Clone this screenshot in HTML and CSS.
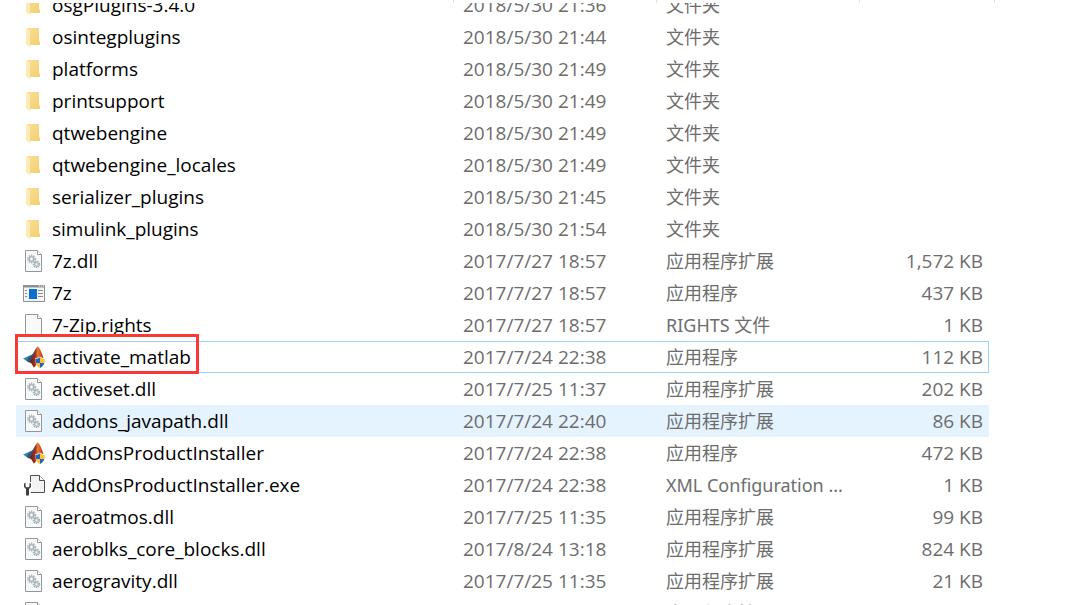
FILE: index.html
```html
<!DOCTYPE html>
<html lang="zh-CN">
  <head>
    <meta charset="utf-8">
    <title>bin</title>
    <link rel="stylesheet" href="styles.css">
  </head>
  <body>
    <!-- icon set -->
    <svg class="sprite" aria-hidden="true">
      <linearGradient id="fold" x1="0" y1="0" x2="1" y2="1">
        <stop offset="0" stop-color="#f8e09a"/>
        <stop offset="1" stop-color="#f3cf6c"/>
      </linearGradient>
      <linearGradient id="flame" x1="0" y1="0" x2="1" y2="0">
        <stop offset="0" stop-color="#5a1a14"/>
        <stop offset=".4" stop-color="#a8301a"/>
        <stop offset=".55" stop-color="#ef7d2c"/>
        <stop offset=".8" stop-color="#c8421f"/>
        <stop offset="1" stop-color="#a52f1a"/>
      </linearGradient>
      <symbol id="folder" viewBox="0 0 22 22">
        <path d="M4 2h12v13l1 1v3H6z" fill="url(#fold)"/>
        <path d="M3 2l4 2.500v17l-4-3z" fill="#fcebb8"/>
      </symbol>
      <symbol id="dll" viewBox="0 0 22 22">
        <path d="M2.500 .5h12l4 4v17h-16z" fill="#f8f9f9" stroke="#94989a"/>
        <path d="M14.500 .5v4h4" fill="#fff" stroke="#94989a"/>
        <circle cx="8.500" cy="9" r="3.600" fill="none" stroke="#a0aab0" stroke-width="1.600" stroke-dasharray="1.300 1"/>
        <circle cx="8.500" cy="9" r="2.400" fill="#d5dde1" stroke="#99a4aa"/>
        <circle cx="8.500" cy="9" r=".9" fill="#fff"/>
        <circle cx="13.500" cy="14.300" r="3" fill="none" stroke="#93a5af" stroke-width="1.400" stroke-dasharray="1.200 .9"/>
        <circle cx="13.500" cy="14.300" r="1.900" fill="#e3eef3" stroke="#93a5af"/>
      </symbol>
      <symbol id="app" viewBox="0 0 22 22">
        <path d="M.5 3.500h21v16H.5z" fill="#f4f5f5" stroke="#8b9194"/>
        <path d="M0 3h22v2.500H0z" fill="#8b9194"/>
        <path d="M16 4h1M18 4h1M20 4h1" stroke="#fff"/>
        <path d="M6 7h8v10H6z" fill="#0b6fd6"/>
        <path d="M2 8.500h2M2 11.500h2M2 14.500h2M15 8.500h5M15 11.500h5M15 14.500h5" stroke="#858b8f"/>
      </symbol>
      <symbol id="blank" viewBox="0 0 22 22">
        <path d="M2.500 .5h12l4 4v17h-16z" fill="#f8f9f9" stroke="#94989a"/>
        <path d="M14.500 .5v4h4" fill="#fff" stroke="#94989a"/>
      </symbol>
      <symbol id="matlab" viewBox="0 0 22 22">
        <path d="M0 12.500l7-3 3 3.500-4 3.500z" fill="#3d7fb5"/>
        <path d="M7 9.500c3 0 4-5 7-8l-3 11-5 4-2.500-2z" fill="#2b5673"/>
        <path d="M14.500 .2c2.500 1 4.500 8 7.500 15.300l-8 2c-1.500 2-1.500 3.500-3.500 4-1-3-2.500-5-4.500-5.500C10 13.500 12 3 14.500 .2z" fill="url(#flame)"/>
        <path d="M17 10.500c1.500 1.200 3 1.700 5 1.700 0 4.800-1.500 7.800-5 9.800-3.500-2-5-5-5-9.800 2 0 3.500-.5 5-1.700z" fill="#fff"/>
        <path d="M17 11.200V17h-4.400c-.2-1.200-.3-2.700-.3-4.200 1.800 0 3.300-.6 4.700-1.600zM17 17h4.400c-.6 2-2 3.700-4.400 4.900z" fill="#1c67bd"/>
        <path d="M17 11.200c1.400 1 2.900 1.600 4.700 1.600 0 1.500-.1 3-.3 4.200H17zM17 17v4.900c-2.400-1.200-3.800-2.900-4.400-4.900z" fill="#fdc22d"/>
      </symbol>
      <symbol id="config" viewBox="0 0 22 22">
        <path d="M7.500 1.500h9l5 5v12h-14z" fill="#f3f3f3" stroke="#505050"/>
        <path d="M16.500 1.500v5h5" fill="#fff" stroke="#505050"/>
        <path d="M-1 8h10v8l-3 6H0z" fill="#fff"/>
        <path d="M1 9.500v3.500l2 2V21.500h3V15l2-2V9.500l-1.500-.8v3.600l-1 .9H3.500l-1-.9V8.700z" fill="#404040"/>
      </symbol>
    </svg>

    <div class="heads"><i></i><i></i><i></i><i></i></div>
    <div class="list">
      <table>
        <colgroup>
          <col>
          <col class="c-date">
          <col class="c-type">
          <col class="c-size">
        </colgroup>
        <tbody>
          <tr><td><div class="name"><svg><use href="#folder"/></svg>osgPlugins-3.4.0</div></td><td>2018/5/30 21:36</td><td class="type">文件夹</td><td></td></tr>
          <tr><td><div class="name"><svg><use href="#folder"/></svg>osintegplugins</div></td><td>2018/5/30 21:44</td><td class="type">文件夹</td><td></td></tr>
          <tr><td><div class="name"><svg><use href="#folder"/></svg>platforms</div></td><td>2018/5/30 21:49</td><td class="type">文件夹</td><td></td></tr>
          <tr><td><div class="name"><svg><use href="#folder"/></svg>printsupport</div></td><td>2018/5/30 21:49</td><td class="type">文件夹</td><td></td></tr>
          <tr><td><div class="name"><svg><use href="#folder"/></svg>qtwebengine</div></td><td>2018/5/30 21:49</td><td class="type">文件夹</td><td></td></tr>
          <tr><td><div class="name"><svg><use href="#folder"/></svg>qtwebengine_locales</div></td><td>2018/5/30 21:49</td><td class="type">文件夹</td><td></td></tr>
          <tr><td><div class="name"><svg><use href="#folder"/></svg>serializer_plugins</div></td><td>2018/5/30 21:45</td><td class="type">文件夹</td><td></td></tr>
          <tr><td><div class="name"><svg><use href="#folder"/></svg>simulink_plugins</div></td><td>2018/5/30 21:54</td><td class="type">文件夹</td><td></td></tr>
          <tr><td><div class="name"><svg><use href="#dll"/></svg>7z.dll</div></td><td>2017/7/27 18:57</td><td class="type">应用程序扩展</td><td class="size">1,572 KB</td></tr>
          <tr><td><div class="name"><svg><use href="#app"/></svg>7z</div></td><td>2017/7/27 18:57</td><td class="type">应用程序</td><td class="size">437 KB</td></tr>
          <tr><td><div class="name"><svg><use href="#blank"/></svg>7-Zip.rights</div></td><td>2017/7/27 18:57</td><td class="type">RIGHTS 文件</td><td class="size">1 KB</td></tr>
          <tr class="focused"><td><div class="name marked"><svg><use href="#matlab"/></svg>activate_matlab</div></td><td>2017/7/24 22:38</td><td class="type">应用程序</td><td class="size">112 KB</td></tr>
          <tr><td><div class="name"><svg><use href="#dll"/></svg>activeset.dll</div></td><td>2017/7/25 11:37</td><td class="type">应用程序扩展</td><td class="size">202 KB</td></tr>
          <tr class="hover"><td><div class="name"><svg><use href="#dll"/></svg>addons_javapath.dll</div></td><td>2017/7/24 22:40</td><td class="type">应用程序扩展</td><td class="size">86 KB</td></tr>
          <tr><td><div class="name"><svg><use href="#matlab"/></svg>AddOnsProductInstaller</div></td><td>2017/7/24 22:38</td><td class="type">应用程序</td><td class="size">472 KB</td></tr>
          <tr><td><div class="name"><svg><use href="#config"/></svg>AddOnsProductInstaller.exe</div></td><td>2017/7/24 22:38</td><td class="type">XML Configuration ...</td><td class="size">1 KB</td></tr>
          <tr><td><div class="name"><svg><use href="#dll"/></svg>aeroatmos.dll</div></td><td>2017/7/25 11:35</td><td class="type">应用程序扩展</td><td class="size">99 KB</td></tr>
          <tr><td><div class="name"><svg><use href="#dll"/></svg>aeroblks_core_blocks.dll</div></td><td>2017/8/24 13:18</td><td class="type">应用程序扩展</td><td class="size">824 KB</td></tr>
          <tr><td><div class="name"><svg><use href="#dll"/></svg>aerogravity.dll</div></td><td>2017/7/25 11:35</td><td class="type">应用程序扩展</td><td class="size">21 KB</td></tr>
          <tr><td><div class="name"><svg><use href="#dll"/></svg></div></td><td></td><td class="type">应用程序扩展</td><td></td></tr>
        </tbody>
      </table>
    </div>
  </body>
</html>
```
FILE: styles.css
```css
html,body{
  margin:0;
  padding:0;
}
body{
  display:flex;
  flex-direction:column;
  height:100vh;
  overflow:hidden;
  background-color:#fff;
  color:#6d6d6d;
  font-family:"Open Sans","Noto Sans CJK SC",sans-serif;
  font-size:19px;
  line-height:32px;
}
.sprite{
  position:absolute;
  width:0;
  height:0;
}

/* bottom edge of the column headers */
.heads{
  display:grid;
  grid-template-columns:1fr 203px 203px 135px;
  flex:none;
  height:3px;
  padding:0 96px 0 16px;
}
.heads i{
  border-right:1px solid #e2e2e2;
}

/* list is scrolled part way through its first row */
.list{
  flex:1;
  min-height:0;
  padding:0 102px 0 16px;
  overflow:hidden;
}
table{
  width:100%;
  margin-top:-14px;
  table-layout:fixed;
  border-collapse:separate;
  border-spacing:0;
}
.c-date,.c-type{
  width:203px;
}
.c-size{
  width:130px;
}
td{
  height:32px;
  padding:0 0 0 10px;
  white-space:nowrap;
}
td:first-child{
  padding-left:7px;
}
.name{
  display:flex;
  align-items:center;
  gap:7px;
  height:32px;
  color:#000;
}
.name svg{
  flex:none;
  width:22px;
  height:22px;
}
td.type{
  font-family:"Noto Sans","Noto Sans CJK SC",sans-serif;
  font-size:18px;
}
td.size{
  padding-right:6px;
  text-align:right;
}
.hover{
  background-color:#e5f3ff;
}
.focused{
  outline:1px solid #99d1ff;
  outline-offset:-1px;
}
.marked{
  position:relative;
}
.marked::after{
  content:"";
  position:absolute;
  top:-7px;
  left:-8px;
  width:178px;
  height:34px;
  border:3px solid #fb3838;
}
```
